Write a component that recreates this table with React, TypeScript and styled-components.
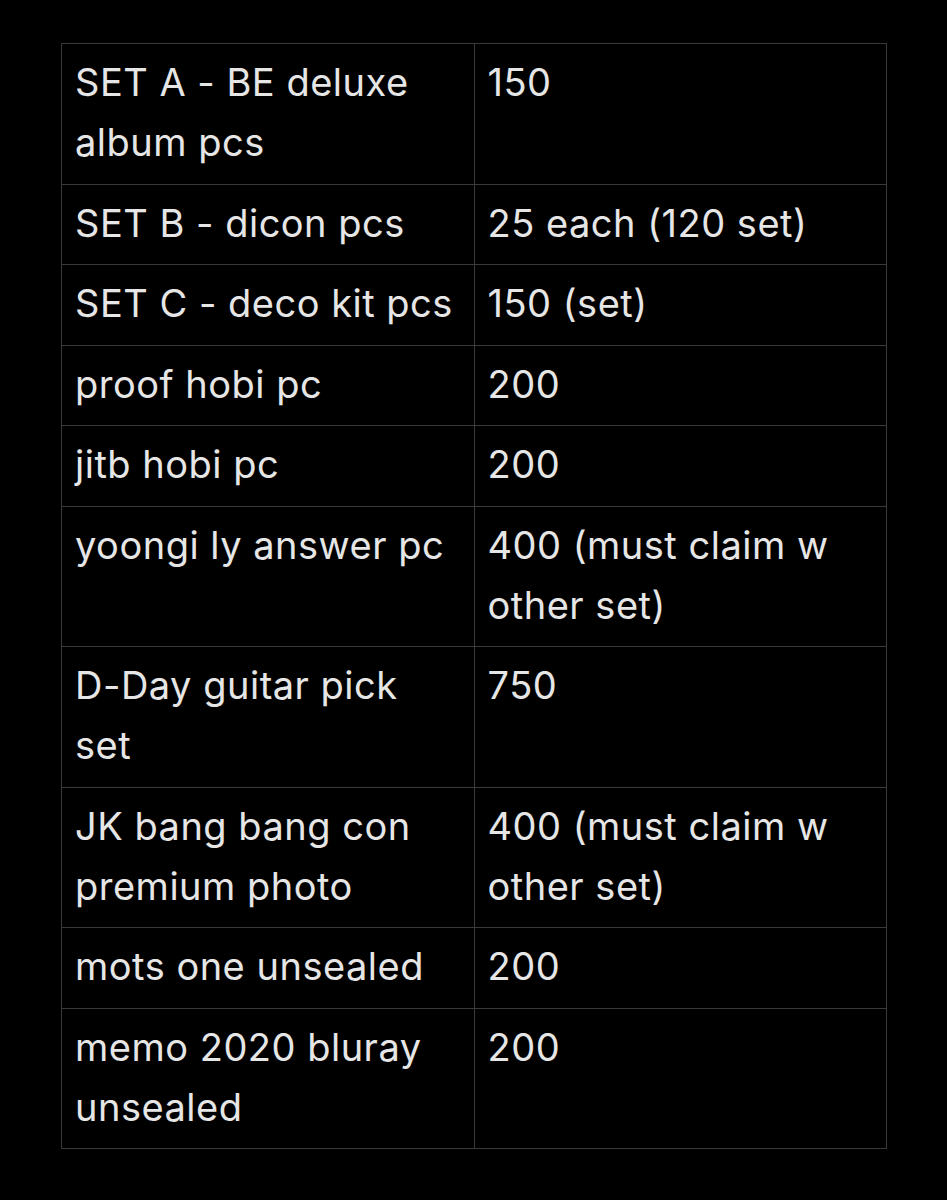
import React from "react"
import styled, { createGlobalStyle } from "styled-components"

const GlobalStyle = createGlobalStyle`
  html, body {
    margin: 0;
    padding: 0;
    background: #000;
  }
`

const Page = styled.main`
  width: 947px;
  height: 1200px;
  background: #000;
  padding: 43px 0 0 61px;
  box-sizing: border-box;
`

const Table = styled.table`
  border-collapse: collapse;
  table-layout: fixed;
  width: 826px;
  font-family: Inter, "Liberation Sans", Arial, sans-serif;
  font-size: 38px;
  letter-spacing: 0.5px;
  line-height: 60px;
  color: #e6e6e6;
`

const Cell = styled.td`
  border: 1px solid #3a3a3a;
  padding: 8px 20px 11.5px 13px;
  vertical-align: top;
  width: 50%;
`

const rows: [string, string][] = [
  ["SET A - BE deluxe album pcs", "150"],
  ["SET B - dicon pcs", "25 each (120 set)"],
  ["SET C - deco kit pcs", "150 (set)"],
  ["proof hobi pc", "200"],
  ["jitb hobi pc", "200"],
  ["yoongi ly answer pc", "400 (must claim w other set)"],
  ["D-Day guitar pick set", "750"],
  ["JK bang bang con premium photo", "400 (must claim w other set)"],
  ["mots one unsealed", "200"],
  ["memo 2020 bluray unsealed", "200"],
]

const App = (): JSX.Element => {
  return (
    <>
      <GlobalStyle />
      <Page>
        <Table>
          <tbody>
            {rows.map(([item, price]) => (
              <tr key={item}>
                <Cell>{item}</Cell>
                <Cell>{price}</Cell>
              </tr>
            ))}
          </tbody>
        </Table>
      </Page>
    </>
  )
}
export default App
